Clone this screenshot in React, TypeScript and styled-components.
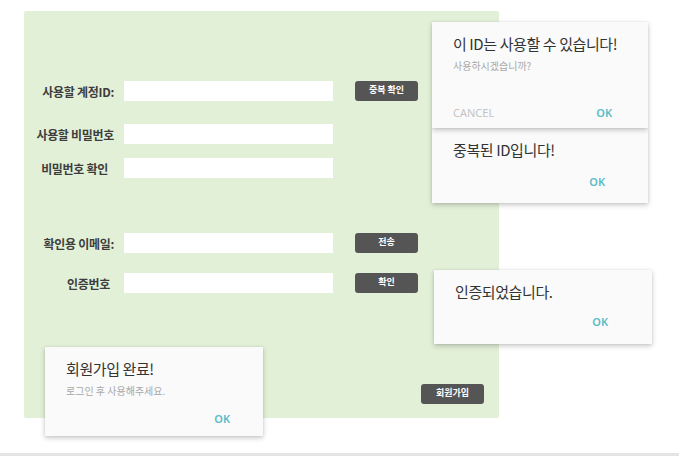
import * as React from 'react';
import styled, { createGlobalStyle } from 'styled-components';

const GlobalStyle = createGlobalStyle`
  html, body {
    margin: 0;
    padding: 0;
    background: #ffffff;
  }
  body {
    font-family: 'Noto Sans CJK KR', 'Noto Sans', sans-serif;
  }
`;

const Page = styled.div`
  position: relative;
  width: 679px;
  height: 456px;
  overflow: hidden;
  background: #ffffff;
  padding-top: 11px;
  box-sizing: border-box;
`;

const Panel = styled.div`
  width: 475px;
  height: 407px;
  margin-left: 24px;
  padding: 70px 15px 0 0;
  box-sizing: border-box;
  background: #e3f0d8;
  border-radius: 2px;
  display: flex;
  flex-direction: column;
`;

const Row = styled.div<{ $gap: number }>`
  display: grid;
  grid-template-columns: 90px 209px 63px;
  column-gap: 10px;
  align-items: center;
  height: 20px;
  margin-top: ${(p) => p.$gap}px;
  & > button {
    margin-left: 12px;
  }
`;

const Label = styled.label<{ $inset?: number }>`
  text-align: right;
  padding-right: ${(p) => p.$inset ?? 0}px;
  font-size: 12px;
  font-weight: 700;
  color: #3d3d3d;
  white-space: nowrap;
  letter-spacing: -0.3px;
`;

const Field = styled.input`
  height: 20px;
  border: none;
  outline: none;
  background: #ffffff;
  padding: 0 6px;
  box-sizing: border-box;
  font-size: 11px;
`;

const DarkButton = styled.button`
  width: 63px;
  height: 20px;
  border: none;
  border-radius: 3px;
  background: #555555;
  color: #ffffff;
  font-family: 'Noto Sans CJK KR', sans-serif;
  font-size: 9px;
  font-weight: 700;
  padding: 0 0 3px;
  cursor: pointer;
`;

const Footer = styled.div`
  display: flex;
  justify-content: flex-end;
  margin-top: 91px;
`;

const Divider = styled.div`
  height: 3px;
  margin-top: 35px;
  background: #e4e4e4;
`;

const Dialog = styled.div<{ $x: number; $y: number; $w: number; $h: number; $z: number }>`
  position: absolute;
  left: ${(p) => p.$x}px;
  top: ${(p) => p.$y}px;
  width: ${(p) => p.$w}px;
  height: ${(p) => p.$h}px;
  z-index: ${(p) => p.$z};
  box-sizing: border-box;
  padding: 12px 0 0 21px;
  background: #fafafa;
  box-shadow: 0 2px 5px rgba(0, 0, 0, 0.22), 0 0 2px rgba(0, 0, 0, 0.08);
  display: flex;
  flex-direction: column;
`;

const DialogTitle = styled.div`
  font-size: 15px;
  line-height: 20px;
  color: #333333;
  letter-spacing: -0.4px;
  white-space: nowrap;
`;

const DialogText = styled.div`
  margin-top: 4px;
  font-size: 10px;
  line-height: 16px;
  color: #a8a8a8;
  white-space: nowrap;
`;

const Actions = styled.div<{ $gap: number; $inset: number }>`
  display: flex;
  align-items: center;
  justify-content: space-between;
  height: 20px;
  margin-top: ${(p) => p.$gap}px;
  padding-right: ${(p) => p.$inset}px;
`;

const TextButton = styled.span<{ $muted?: boolean }>`
  font-family: 'Noto Sans', sans-serif;
  font-size: 11px;
  font-weight: ${(p) => (p.$muted ? 400 : 600)};
  color: ${(p) => (p.$muted ? '#c4c4c4' : '#5bbcc9')};
  margin-left: ${(p) => (p.$muted ? 0 : 'auto')};
  cursor: pointer;
`;

type Popup = {
  x: number;
  y: number;
  w: number;
  h: number;
  z: number;
  title: string;
  text?: string;
  cancel?: boolean;
  gap: number;
  inset: number;
};

const popups: Popup[] = [
  { x: 432, y: 22, w: 216, h: 106, z: 3, title: '이 ID는 사용할 수 있습니다!', text: '사용하시겠습니까?', cancel: true, gap: 28, inset: 36 },
  { x: 432, y: 128, w: 216, h: 75, z: 2, title: '중복된 ID입니다!', gap: 11, inset: 43 },
  { x: 434, y: 270, w: 218, h: 74, z: 2, title: '인증되었습니다.', gap: 9, inset: 44 },
  { x: 45, y: 347, w: 218, h: 89, z: 2, title: '회원가입 완료!', text: '로그인 후 사용해주세요.', gap: 9, inset: 33 },
];

export default function App() {
  return (
    <Page>
      <GlobalStyle />
      <Panel>
        <Row $gap={0}>
          <Label>사용할 계정ID:</Label>
          <Field />
          <DarkButton>중복 확인</DarkButton>
        </Row>
        <Row $gap={23}>
          <Label>사용할 비밀번호</Label>
          <Field type="password" />
        </Row>
        <Row $gap={14}>
          <Label $inset={6}>비밀번호 확인</Label>
          <Field type="password" />
        </Row>
        <Row $gap={55}>
          <Label>확인용 이메일:</Label>
          <Field />
          <DarkButton>전송</DarkButton>
        </Row>
        <Row $gap={20}>
          <Label $inset={4}>인증번호</Label>
          <Field />
          <DarkButton>확인</DarkButton>
        </Row>
        <Footer>
          <DarkButton>회원가입</DarkButton>
        </Footer>
      </Panel>
      <Divider />
      {popups.map((p) => (
        <Dialog key={p.title} $x={p.x} $y={p.y} $w={p.w} $h={p.h} $z={p.z}>
          <DialogTitle>{p.title}</DialogTitle>
          {p.text && <DialogText>{p.text}</DialogText>}
          <Actions $gap={p.gap} $inset={p.inset}>
            {p.cancel && <TextButton $muted>CANCEL</TextButton>}
            <TextButton>OK</TextButton>
          </Actions>
        </Dialog>
      ))}
    </Page>
  );
}
